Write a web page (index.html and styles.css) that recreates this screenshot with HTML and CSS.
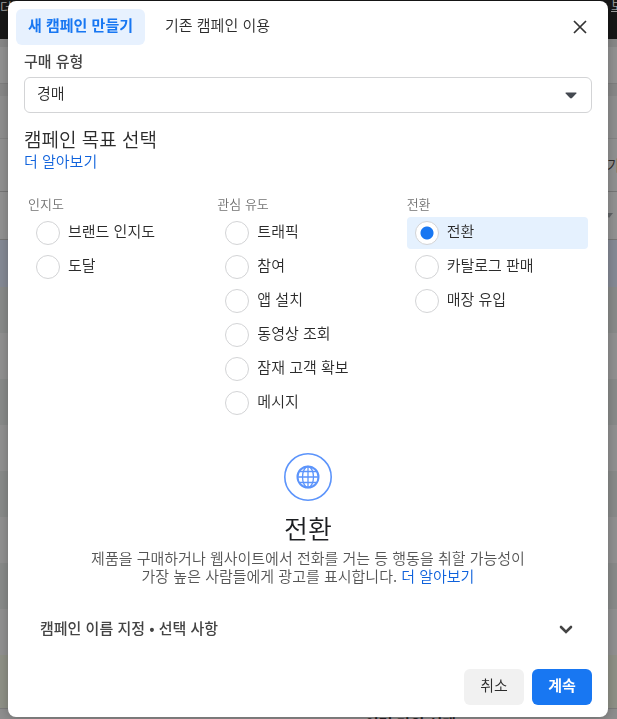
FILE: index.html
```html
<!DOCTYPE html>
<html lang="ko">
<head>
  <meta charset="utf-8">
  <title>새 캠페인 만들기</title>
  <link rel="stylesheet" href="styles.css">
</head>
<body>
  <div class="page">
    <div class="topbar"><span>더</span><a href="#">보</a></div>
    <div class="toolbar"></div>
    <div class="filters"></div>
    <div class="actions"><span>가</span></div>
    <div class="columns-head">
      <svg width="8" height="5" viewBox="0 0 8 5"><path d="M0 0h8L4 5z" fill="#626467"/></svg>
    </div>
    <div class="row selected"></div>
    <div class="row"></div>
    <div class="row"></div>
    <div class="row"></div>
    <div class="row"></div>
    <div class="row"></div>
    <div class="row"></div>
    <div class="row"></div>
    <div class="row"></div>
    <div class="row total"></div>
    <div class="page-footer"><span>이런 단위 선택</span></div>
  </div>

  <div class="overlay">
    <form class="modal" role="dialog" aria-label="새 캠페인 만들기">
      <div class="modal-head">
        <button type="button" class="tab active">새 캠페인 만들기</button>
        <button type="button" class="tab">기존 캠페인 이용</button>
        <button type="button" class="close" aria-label="닫기">
          <svg width="14" height="14" viewBox="0 0 14 14"><path d="M1 1l12 12M13 1L1 13" stroke="#333" stroke-width="1.7" fill="none"/></svg>
        </button>
      </div>

      <div class="modal-body">
        <label class="field-label" for="type">구매 유형</label>
        <div class="select">
          <select id="type">
            <option>경매</option>
          </select>
          <svg width="12" height="7" viewBox="0 0 12 7"><path d="M1 .5h10q.8.2.3 1L7 6q-1 .9-2 0L.7 1.5Q.2.7 1 .5z" fill="#444950"/></svg>
        </div>

        <h2>캠페인 목표 선택</h2>
        <a class="more" href="#">더 알아보기</a>

        <div class="objectives">
          <div class="group">
            <div class="group-title">인지도</div>
            <label class="option"><input type="radio" name="objective"><span>브랜드 인지도</span></label>
            <label class="option"><input type="radio" name="objective"><span>도달</span></label>
          </div>
          <div class="group">
            <div class="group-title">관심 유도</div>
            <label class="option"><input type="radio" name="objective"><span>트래픽</span></label>
            <label class="option"><input type="radio" name="objective"><span>참여</span></label>
            <label class="option"><input type="radio" name="objective"><span>앱 설치</span></label>
            <label class="option"><input type="radio" name="objective"><span>동영상 조회</span></label>
            <label class="option"><input type="radio" name="objective"><span>잠재 고객 확보</span></label>
            <label class="option"><input type="radio" name="objective"><span>메시지</span></label>
          </div>
          <div class="group">
            <div class="group-title">전환</div>
            <label class="option checked"><input type="radio" name="objective" checked><span>전환</span></label>
            <label class="option"><input type="radio" name="objective"><span>카탈로그 판매</span></label>
            <label class="option"><input type="radio" name="objective"><span>매장 유입</span></label>
          </div>
        </div>

        <div class="detail">
          <svg width="48" height="48" viewBox="0 0 48 48" fill="none" stroke="#5c94fb">
            <circle cx="24" cy="24" r="23.2" stroke-width="1.6"/>
            <circle cx="24" cy="24" r="10.5" stroke-width="2"/>
            <ellipse cx="24" cy="24" rx="5.5" ry="10.5" stroke-width="1.3"/>
            <path d="M24 13.5v21M13.5 24h21M15.5 18.5h17M15.5 29.5h17" stroke-width="1.3"/>
          </svg>
          <h3>전환</h3>
          <p>제품을 구매하거나 웹사이트에서 전화를 거는 등 행동을 취할 가능성이<br>가장 높은 사람들에게 광고를 표시합니다. <a href="#">더 알아보기</a></p>
        </div>

        <button type="button" class="accordion">
          <span>캠페인 이름 지정 • 선택 사항</span>
          <svg width="14" height="10" viewBox="0 0 14 10"><path d="M2 3l5 5 5-5" stroke="#444" stroke-width="2.6" fill="none" stroke-linecap="round"/></svg>
        </button>

        <div class="buttons">
          <button type="button" class="btn">취소</button>
          <button type="submit" class="btn primary">계속</button>
        </div>
      </div>
    </form>
  </div>
</body>
</html>
```

FILE: styles.css
```css
* {
    box-sizing: border-box;
    margin: 0;
    padding: 0;
}

body {
    font-family: "Noto Sans CJK KR", sans-serif;
    font-size: 15px;
    font-weight: 350;
    line-height: 18px;
    color: #2b2b2b;
    background: #929292;
}

button, select {
    font: inherit;
    color: inherit;
    border: 0;
    background: none;
    cursor: pointer;
}

a {
    color: #0f62dc;
    text-decoration: none;
}

svg {
    display: block;
    flex: none;
}

/* page behind the dialog */
.page {
    height: 100vh;
    overflow: hidden;
}

.topbar {
    display: flex;
    justify-content: space-between;
    height: 39px;
    background: #171717;
    color: #a0a0a0;
    font-size: 13px;
    line-height: 14px;
    white-space: nowrap;
}

.topbar a {
    width: 6px;
    height: 12px;
    line-height: 10px;
    border-bottom: 1px solid #a0a0a0;
    color: #a0a0a0;
}

.toolbar {
    height: 45px;
    border-top: 8px solid #898989;
    border-bottom: 1px solid #808080;
    background: #939393;
}

.filters {
    height: 55px;
    border-top: 12px solid #898989;
    border-bottom: 1px solid #858585;
    background: #909090;
}

.actions {
    display: flex;
    justify-content: flex-end;
    align-items: center;
    height: 53px;
    border-bottom: 1px solid #777;
    background: #929292;
}

.actions span {
    width: 10px;
    white-space: nowrap;
}

.columns-head {
    display: flex;
    justify-content: flex-end;
    align-items: center;
    height: 48px;
    padding-right: 4px;
    border-bottom: 1px solid #777;
    background: #939393;
}

.row {
    height: 46px;
    background: #929292;
}

.row:nth-child(odd) {
    background: #8a8c8b;
}

.row.selected {
    height: 47px;
    background: #868b96;
}

.row.total {
    height: 54px;
    border-bottom: 1px solid #7d7d7d;
    background: #909288;
}

.page-footer {
    display: flex;
    justify-content: center;
    height: 36px;
    padding: 6px 0 0 204px;
    background: #8f8f8f;
}

.page-footer span {
    color: #222;
    font-weight: bold;
}

/* dialog */
.overlay {
    position: fixed;
    inset: 0;
    padding: 1px 9px 2px 8px;
    overflow: hidden;
}

.modal {
    border-radius: 8px;
    background: #fff;
    box-shadow: 0 2px 12px rgba(0, 0, 0, 0.25);
}

.modal-head {
    display: flex;
    align-items: center;
    gap: 8px;
    padding: 8px 16px 0 8px;
}

.tab {
    height: 36px;
    padding: 0 12px 4px;
    border-radius: 6px;
}

.tab.active {
    background: #e7f1fe;
    color: #1877f2;
    font-weight: bold;
}

.close {
    margin-left: auto;
    padding: 5px;
}

.modal-body {
    padding: 7px 16px 12px;
}

.field-label {
    display: block;
    margin-bottom: 7px;
    font-weight: 500;
    color: #444;
}

.select {
    display: flex;
    align-items: center;
    height: 36px;
    padding-right: 14px;
    border: 1px solid #d3d4d6;
    border-radius: 6px;
}

.select select {
    flex: 1;
    height: 34px;
    padding: 0 12px 4px;
    appearance: none;
}

h2 {
    margin-top: 14px;
    font-size: 19px;
    line-height: 24px;
    font-weight: 350;
}

.more {
    display: block;
    margin-top: 1px;
}

.objectives {
    display: grid;
    grid-template-columns: 1fr 1fr 1fr;
    margin-top: 25px;
}

.group {
    display: flex;
    flex-direction: column;
    gap: 2px;
    padding: 0 4px;
}

.group-title {
    margin-bottom: 2px;
    font-size: 13px;
    color: #737373;
}

.option {
    display: flex;
    align-items: center;
    gap: 8px;
    height: 32px;
    padding: 0 8px;
    border-radius: 4px;
    cursor: pointer;
}

.option span {
    padding-bottom: 4px;
}

.option.checked {
    background: #e5f1fe;
}

.option input {
    width: 24px;
    height: 24px;
    border: 1px solid #d3d4d6;
    border-radius: 50%;
    background: #fff;
    appearance: none;
}

.option input:checked {
    background: radial-gradient(circle, #1877f2 6px, #fff 7px);
}

.detail {
    display: flex;
    flex-direction: column;
    align-items: center;
    margin-top: 34px;
    text-align: center;
}

h3 {
    margin-top: 11px;
    font-size: 26px;
    line-height: 32px;
    font-weight: 350;
    color: #1c1e21;
}

.detail p {
    margin-top: 5px;
    color: #555;
}

.accordion {
    display: flex;
    justify-content: space-between;
    align-items: center;
    width: 100%;
    height: 36px;
    margin-top: 26px;
    padding: 0 19px 0 16px;
    font-weight: 500;
    color: #444;
}

.accordion span {
    padding-bottom: 2px;
}

.buttons {
    display: flex;
    justify-content: flex-end;
    gap: 8px;
    margin-top: 22px;
}

.btn {
    width: 60px;
    height: 36px;
    padding-bottom: 4px;
    border-radius: 6px;
    background: #f1f1f1;
}

.btn.primary {
    background: #1877f2;
    color: #fff;
    font-weight: bold;
}
```
